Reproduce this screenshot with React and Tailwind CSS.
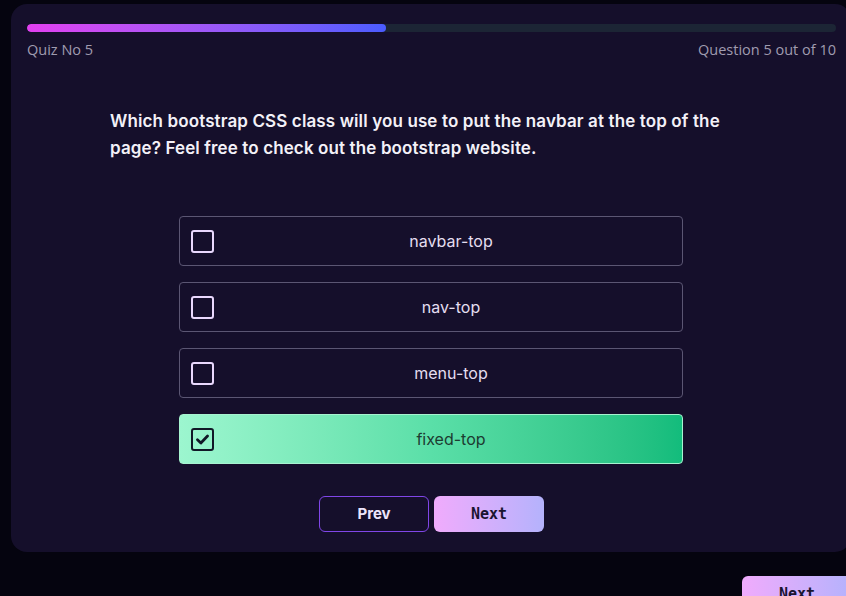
import React, { useState } from "react";

const options = ["navbar-top", "nav-top", "menu-top", "fixed-top"];

function CheckIcon() {
  return (
    <svg width="15" height="15" viewBox="0 0 14 14" fill="none">
      <path d="M2.3 7.2 L5.5 10.2 L11.7 3.8" stroke="#111827" strokeWidth="2.6" strokeLinecap="round" strokeLinejoin="round" />
    </svg>
  );
}

export default function App() {
  const [selected, setSelected] = useState(3);
  return (
    <div className="relative w-[846px] h-[596px] overflow-hidden bg-[#05040f] pl-[11px] pt-[4px]" style={{ fontFamily: "Inter, 'Noto Sans', sans-serif" }}>
      <div className="w-[840px] h-[548px] rounded-[16px] bg-[#150f2b] pl-4 pr-[15px] pt-5 flex flex-col">
        <div className="h-[8px] w-full rounded-full bg-[#1c2535] overflow-hidden">
          <div className="h-full w-[359px] rounded-full bg-gradient-to-r from-[#e23ff0] to-[#4a5cff]" />
        </div>
        <div className="mt-[9px] flex justify-between text-[14.5px] text-[#a09cb0] leading-[18px]" style={{ fontFamily: "'Open Sans', Inter, sans-serif" }}>
          <span>Quiz No 5</span>
          <span>Question 5 out of 10</span>
        </div>
        <div className="mt-[49px] ml-[83px] w-[630px] text-[17px] font-semibold leading-[27px] tracking-[0.12px] text-[#f3f1f8]">
          Which bootstrap CSS class will you use to put the navbar at the top of the page? Feel free to check out the bootstrap website.
        </div>
        <div className="mt-[54px] ml-[152px] w-[504px] flex flex-col gap-4">
          {options.map((o, i) => {
            const on = selected === i;
            return (
              <button
                key={o}
                onClick={() => setSelected(i)}
                className={
                  "h-[50px] w-full rounded-[4px] flex items-center pl-[11px] border " +
                  (on
                    ? "border-[#a7f3d0] bg-gradient-to-r from-[#9cf6cf] via-[#5adfa8] to-[#12bc7c]"
                    : "border-[#5b5673] bg-[#150f2b]")
                }
              >
                <span
                  className={
                    "w-[23px] h-[23px] rounded-[3px] border-[2.5px] flex items-center justify-center shrink-0 " +
                    (on ? "border-[#111827]" : "border-[#e9d8fd]")
                  }
                >
                  {on && <CheckIcon />}
                </span>
                <span className={"flex-1 text-center text-[16px] pl-[6px] " + (on ? "text-[#1d3b31]" : "text-[#e4def0]")}>
                  {o}
                </span>
              </button>
            );
          })}
        </div>
        <div className="mt-[32px] ml-[292px] flex gap-[5px]">
          <button className="w-[110px] h-[36px] rounded-[6px] border border-[#8046e8] text-[15px] font-bold text-[#ece4fb]">
            Prev
          </button>
          <button className="w-[110px] h-[36px] rounded-[6px] bg-gradient-to-r from-[#f0abfc] to-[#b4b2fc] text-[15px] font-bold text-[#1a1530]" style={{ fontFamily: "'DejaVu Sans Mono', monospace" }}>
            Next
          </button>
        </div>
      </div>
      <button className="absolute left-[742px] top-[576px] w-[110px] h-[36px] rounded-[6px] bg-gradient-to-r from-[#f0abfc] to-[#b4b2fc] text-[15px] font-bold text-[#1a1530] flex justify-center pt-[7px]" style={{ fontFamily: "'DejaVu Sans Mono', monospace" }}>
        Next
      </button>
    </div>
  );
}
